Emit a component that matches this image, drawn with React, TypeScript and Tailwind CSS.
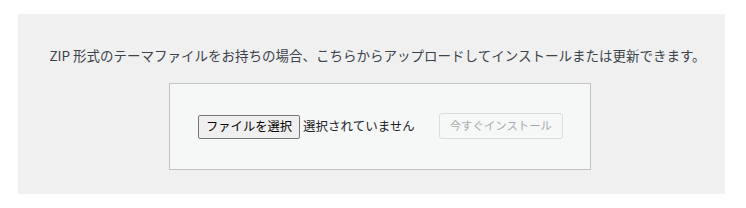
export default function App() {
  const jp = { fontFamily: '"Noto Sans CJK JP", "Noto Sans", sans-serif' };
  return (
    <div className="w-[746px] h-[208px] bg-white pt-[14px] pl-[18px]" style={jp}>
      <div className="w-[707px] h-[180px] bg-[#f0f0f1] flex flex-col items-center pt-[45px]">
        <p className="text-[13.5px] leading-[20px] text-[#3c434a] whitespace-nowrap -mt-[14px] pl-[12px]">
          ZIP 形式のテーマファイルをお持ちの場合、こちらからアップロードしてインストールまたは更新できます。
        </p>
        <div className="mt-[18px] ml-[17px] w-[422px] h-[87px] bg-[#f6f7f7] border border-[#c3c4c7] flex items-center pl-[28px]">
          <button className="h-[24px] px-[7px] bg-[#efefef] border border-[#767676] rounded-[2px] text-[12.3px] leading-none text-black">
            ファイルを選択
          </button>
          <span className="ml-[3px] text-[12.5px] text-[#1d2327]">選択されていません</span>
          <button className="ml-[24px] h-[26px] w-[124px] bg-[#f6f7f7] border border-[#dcdcde] rounded-[3px] text-[11.4px] text-[#a7aaad] -mt-[2px]">
            今すぐインストール
          </button>
        </div>
      </div>
    </div>
  );
}
